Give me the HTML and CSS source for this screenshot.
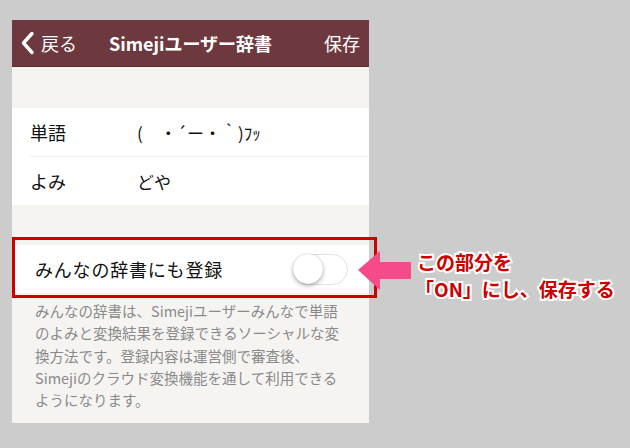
FILE: index.html
```html
<!DOCTYPE html>
<html lang="ja">
<head>
<meta charset="utf-8">
<link rel="stylesheet" href="styles.css">
</head>
<body>
<div class="stage">
  <div class="panel">
    <header class="nav">
      <div class="nav-back">
        <svg class="chev" width="15" height="24" viewBox="0 0 15 24"><polyline points="12,2.5 3.5,12 12,21.5" fill="none" stroke="#fff" stroke-width="3.4" stroke-linecap="round" stroke-linejoin="round"/></svg>
        <span>戻る</span>
      </div>
      <div class="nav-title">Simejiユーザー辞書</div>
      <div class="nav-save">保存</div>
    </header>
    <div class="spacer-top"></div>
    <div class="group">
      <div class="row"><span class="label">単語</span><span class="value">(　・´ー・｀)ﾌｯ</span></div>
      <div class="divider"></div>
      <div class="row"><span class="label">よみ</span><span class="value">どや</span></div>
    </div>
    <div class="spacer-mid"></div>
    <div class="toggle-wrap">
      <div class="row toggle-row">
        <span class="label">みんなの辞書にも登録</span>
        <span class="switch"><span class="knob"></span></span>
      </div>
      <div class="highlight"></div>
    </div>
    <p class="desc">みんなの辞書は、Simejiユーザーみんなで単語<br>のよみと変換結果を登録できるソーシャルな変<br>換方法です。登録内容は運営側で審査後、<br>Simejiのクラウド変換機能を通して利用できる<br>ようになります。</p>
  </div>
  <div class="callout">
    <svg class="arrow" width="54" height="42" viewBox="0 0 54 42"><polygon points="0,19 22,0 22,11 53,11 53,28 22,28 22,39" fill="#f64b8b"/></svg>
    <div class="callout-text"><span>この部分を</span><span class="l2">「ON」にし、保存する</span></div>
  </div>
</div>
</body>
</html>
```
FILE: styles.css
```css
html, body {
  margin: 0;
  padding: 0;
  background: #cccccc;
  font-family: "Noto Sans CJK JP", "Noto Sans", sans-serif;
}
.stage {
  position: relative;
  width: 630px;
  height: 448px;
  padding: 20px 0 0 12px;
  box-sizing: border-box;
}
.panel {
  width: 357px;
  background: #f5f4f1;
  padding-bottom: 12px;
}
.nav {
  height: 46px;
  background: #6e393e;
  border-bottom: 1px solid #5c2c31;
  color: #fff;
  display: flex;
  align-items: center;
  position: relative;
}
.nav-back {
  display: flex;
  align-items: center;
  gap: 6px;
  padding-left: 8px;
  font-size: 18px;
}
.chev { display: block; }
.nav-title {
  position: absolute;
  left: 0;
  right: 0;
  text-align: center;
  font-weight: bold;
  font-size: 18px;
  pointer-events: none;
}
.nav-save {
  margin-left: auto;
  padding-right: 9px;
  font-size: 18px;
}
.spacer-top { height: 41px; }
.group { background: #fff; }
.row {
  height: 48px;
  display: flex;
  align-items: center;
  padding-left: 18px;
  font-size: 18px;
  color: #111;
}
.label { width: 107px; }
.value { font-size: 17px; }
.divider {
  height: 1px;
  margin-left: 18px;
  background: #efefef;
}
.spacer-mid { height: 40px; }
.toggle-wrap { position: relative; }
.toggle-row {
  background: #fff;
  padding-left: 23px;
  padding-right: 21px;
}
.toggle-row .label { width: auto; flex: 1; letter-spacing: 0.8px; }
.switch {
  width: 55px;
  height: 31px;
  box-sizing: border-box;
  border: 1.5px solid #e3e3e3;
  border-radius: 16px;
  background: #fff;
  position: relative;
}
.knob {
  position: absolute;
  left: -1px;
  top: -1px;
  width: 30px;
  height: 30px;
  border-radius: 50%;
  background: #fff;
  box-shadow: 0 2px 4px rgba(0,0,0,0.3), 0 0 1px rgba(0,0,0,0.25);
}
.highlight {
  position: absolute;
  left: 0;
  top: -8px;
  width: 365px;
  height: 61px;
  box-sizing: border-box;
  border: 3.5px solid #cc0000;
}
.desc {
  margin: 0;
  padding: 7px 0 0 23px;
  font-size: 14.5px;
  line-height: 22.3px;
  color: #8a8a8a;
}
.callout {
  position: absolute;
  left: 358px;
  top: 251px;
  display: flex;
  align-items: flex-start;
}
.arrow { display: block; }
.callout-text {
  display: flex;
  flex-direction: column;
  margin-left: 5px;
  margin-top: -1px;
  color: #cc0000;
  font-weight: bold;
  font-size: 19px;
  line-height: 24px;
  -webkit-text-stroke: 4px #fff;
  paint-order: stroke fill;
}
.callout-text .l2 { margin-left: -2px; margin-top: 3px; }
```
